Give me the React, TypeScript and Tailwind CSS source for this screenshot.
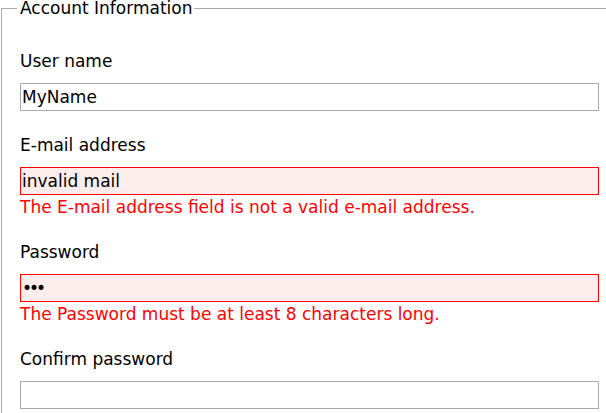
import React from 'react';

const font = { fontFamily: '"DejaVu Sans", Verdana, sans-serif' };

function Field({
  label,
  value,
  type = 'text',
  error,
  className = '',
}: {
  label: string;
  value: string;
  type?: string;
  error?: string;
  className?: string;
}) {
  return (
    <div className={className}>
      <label className="block leading-[20px] text-black mb-[12px]">{label}</label>
      <input
        type={type}
        value={value}
        readOnly
        className={
          'block w-[579px] h-[28px] pl-[1px] text-[17px] leading-[20px] text-black outline-none border ' +
          (type === 'password' ? 'tracking-[-3px] ' : '') +
          (error ? 'border-[#ff0000] bg-[#fdecec]' : 'border-[#a9a9a9] bg-white')
        }
        style={font}
      />
      {error && <div className="mt-[2px] leading-[20px] text-[#ff0000]">{error}</div>}
    </div>
  );
}

export default function App() {
  return (
    <div className="bg-white h-[413px] overflow-hidden text-[17px]" style={font}>
      <fieldset className="ml-[1px] -mt-[2px] w-[640px] border border-[#a9a9a9] pl-[18px] pb-4">
        <legend className="-ml-[3px] pl-[3px] pr-[2px] leading-[20px] text-black">Account Information</legend>
        <Field className="mt-[33px]" label="User name" value="MyName" />
        <Field
          className="mt-[24px]"
          label="E-mail address"
          value="invalid mail"
          error="The E-mail address field is not a valid e-mail address."
        />
        <Field
          className="mt-[25px]"
          label="Password"
          type="password"
          value="abc"
          error="The Password must be at least 8 characters long."
        />
        <Field className="mt-[25px]" label="Confirm password" value="" type="password" />
      </fieldset>
    </div>
  );
}
